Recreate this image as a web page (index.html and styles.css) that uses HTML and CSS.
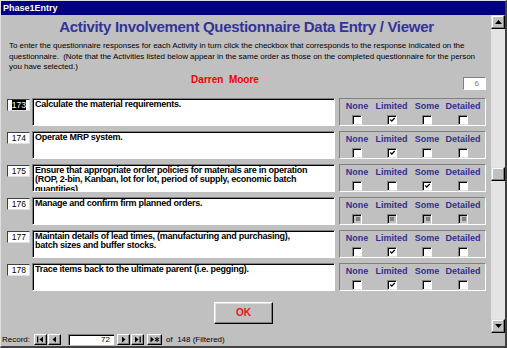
FILE: index.html
```html
<!DOCTYPE html>
<html lang="en">
<head>
    <meta charset="UTF-8">
    <title>Phase1Entry</title>
    <link rel="stylesheet" href="styles.css">
</head>
<body>
<div class="window">
    <div class="titlebar">Phase1Entry</div>

    <div class="frame">
        <div class="form">
            <h1 class="heading">Activity Involvement Questionnaire Data Entry / Viewer</h1>
            <p class="intro">To enter the questionnaire responses for each Activity in turn click the checkbox that corresponds to the response indicated on the<br>questionnaire.&nbsp; (Note that the Activities listed below appear in the same order as those on the completed questionnaire for the person<br>you have selected.)</p>

            <div class="person">
                <div class="person-name">Darren&nbsp; Moore</div>
                <div class="count">6</div>
            </div>

            <div class="activities">
                <div class="activity">
                    <div class="num"><span class="selected">173</span></div>
                    <div class="desc">Calculate the material requirements.</div>
                    <div class="answers">
                        <div class="answer"><span class="answer-label">None</span><span class="check"></span></div>
                        <div class="answer"><span class="answer-label">Limited</span><span class="check on"><svg viewBox="0 0 8 8" width="8" height="8"><path d="M1.5 3.5 L3.2 5.3 L6.5 1.8" fill="none" stroke="#000" stroke-width="1.5"/></svg></span></div>
                        <div class="answer"><span class="answer-label">Some</span><span class="check"></span></div>
                        <div class="answer"><span class="answer-label">Detailed</span><span class="check"></span></div>
                    </div>
                </div>

                <div class="activity">
                    <div class="num">174</div>
                    <div class="desc">Operate MRP system.</div>
                    <div class="answers">
                        <div class="answer"><span class="answer-label">None</span><span class="check"></span></div>
                        <div class="answer"><span class="answer-label">Limited</span><span class="check on"><svg viewBox="0 0 8 8" width="8" height="8"><path d="M1.5 3.5 L3.2 5.3 L6.5 1.8" fill="none" stroke="#000" stroke-width="1.5"/></svg></span></div>
                        <div class="answer"><span class="answer-label">Some</span><span class="check"></span></div>
                        <div class="answer"><span class="answer-label">Detailed</span><span class="check"></span></div>
                    </div>
                </div>

                <div class="activity">
                    <div class="num">175</div>
                    <div class="desc">Ensure that appropriate order policies for materials are in operation<br>(ROP, 2-bin, Kanban, lot for lot, period of supply, economic batch<br>quantities)</div>
                    <div class="answers">
                        <div class="answer"><span class="answer-label">None</span><span class="check"></span></div>
                        <div class="answer"><span class="answer-label">Limited</span><span class="check"></span></div>
                        <div class="answer"><span class="answer-label">Some</span><span class="check on"><svg viewBox="0 0 8 8" width="8" height="8"><path d="M1.5 3.5 L3.2 5.3 L6.5 1.8" fill="none" stroke="#000" stroke-width="1.5"/></svg></span></div>
                        <div class="answer"><span class="answer-label">Detailed</span><span class="check"></span></div>
                    </div>
                </div>

                <div class="activity">
                    <div class="num">176</div>
                    <div class="desc">Manage and confirm firm planned orders.</div>
                    <div class="answers">
                        <div class="answer"><span class="answer-label">None</span><span class="check null"></span></div>
                        <div class="answer"><span class="answer-label">Limited</span><span class="check null"></span></div>
                        <div class="answer"><span class="answer-label">Some</span><span class="check null"></span></div>
                        <div class="answer"><span class="answer-label">Detailed</span><span class="check null"></span></div>
                    </div>
                </div>

                <div class="activity">
                    <div class="num">177</div>
                    <div class="desc">Maintain details of lead times, (manufacturing and purchasing),<br>batch sizes and buffer stocks.</div>
                    <div class="answers">
                        <div class="answer"><span class="answer-label">None</span><span class="check"></span></div>
                        <div class="answer"><span class="answer-label">Limited</span><span class="check on"><svg viewBox="0 0 8 8" width="8" height="8"><path d="M1.5 3.5 L3.2 5.3 L6.5 1.8" fill="none" stroke="#000" stroke-width="1.5"/></svg></span></div>
                        <div class="answer"><span class="answer-label">Some</span><span class="check"></span></div>
                        <div class="answer"><span class="answer-label">Detailed</span><span class="check"></span></div>
                    </div>
                </div>

                <div class="activity">
                    <div class="num">178</div>
                    <div class="desc">Trace items back to the ultimate parent (i.e. pegging).</div>
                    <div class="answers">
                        <div class="answer"><span class="answer-label">None</span><span class="check"></span></div>
                        <div class="answer"><span class="answer-label">Limited</span><span class="check on"><svg viewBox="0 0 8 8" width="8" height="8"><path d="M1.5 3.5 L3.2 5.3 L6.5 1.8" fill="none" stroke="#000" stroke-width="1.5"/></svg></span></div>
                        <div class="answer"><span class="answer-label">Some</span><span class="check"></span></div>
                        <div class="answer"><span class="answer-label">Detailed</span><span class="check"></span></div>
                    </div>
                </div>
            </div>

            <div class="actions">
                <button class="ok">OK</button>
            </div>
        </div>

        <div class="vscroll">
            <div class="sb-btn"><svg viewBox="0 0 7 4" width="7" height="4"><polygon points="3.5,0 7,4 0,4" fill="#000"/></svg></div>
            <div class="sb-thumb"></div>
            <div class="sb-space"></div>
            <div class="sb-btn"><svg viewBox="0 0 7 4" width="7" height="4"><polygon points="0,0 7,0 3.5,4" fill="#000"/></svg></div>
        </div>
    </div>

    <div class="navbar">
        <span class="nav-label">Record:</span>
        <span class="nav-btn first"><svg viewBox="0 0 9 7" width="9" height="7"><rect x="1" y="0.5" width="1.3" height="6" fill="#000"/><polygon points="7,0.5 7,6.5 3.5,3.5" fill="#000"/></svg></span>
        <span class="nav-btn"><svg viewBox="0 0 9 7" width="9" height="7"><polygon points="6,0.5 6,6.5 2.5,3.5" fill="#000"/></svg></span>
        <span class="nav-field">72</span>
        <span class="nav-btn"><svg viewBox="0 0 9 7" width="9" height="7"><polygon points="3,0.5 3,6.5 6.5,3.5" fill="#000"/></svg></span>
        <span class="nav-btn"><svg viewBox="0 0 9 7" width="9" height="7"><polygon points="2,0.5 2,6.5 5.5,3.5" fill="#000"/><rect x="6.5" y="0.5" width="1.3" height="6" fill="#000"/></svg></span>
        <span class="nav-btn wide"><svg viewBox="0 0 11 7" width="11" height="7"><polygon points="1.5,0.5 1.5,6.5 5,3.5" fill="#000"/><path d="M8 1 V6 M5.8 2.2 L10.2 4.8 M5.8 4.8 L10.2 2.2" stroke="#000" stroke-width="1"/></svg></span>
        <span class="nav-total">of&nbsp; 148 (Filtered)</span>
    </div>
</div>
</body>
</html>
```

FILE: styles.css
```css
body {
    margin: 0;
    font-family: "Liberation Sans", Arial, sans-serif;
    background-color: #c0c0c0;
}
.window {
    width: 507px;
    height: 348px;
    box-sizing: border-box;
    border-top: 1px solid #dfdfdf;
    border-left: 1px solid #dfdfdf;
    border-right: 2px solid #404040;
    border-bottom: 2px solid #404040;
    background-color: #c0c0c0;
    display: flex;
    flex-direction: column;
    overflow: hidden;
}
.titlebar {
    height: 14px;
    background-color: #000080;
    color: #fff;
    font-weight: bold;
    font-size: 9px;
    line-height: 14px;
    padding-left: 2px;
}
.frame {
    display: flex;
    height: 318px;
}
.form {
    flex: 1;
    padding: 0 5px 0 6px;
}
.heading {
    margin: 3px 0 0;
    font-size: 15px;
    line-height: 18px;
    letter-spacing: -0.3px;
    text-align: center;
    color: #333399;
}
.intro {
    margin: 5px 0 0 2px;
    font-size: 8px;
    line-height: 10.5px;
    letter-spacing: -0.03px;
    white-space: nowrap;
}
.person {
    display: flex;
    align-items: flex-start;
    height: 25px;
}
.person-name {
    flex: 1;
    margin-top: 1px;
    text-align: center;
    color: #f00000;
    font-weight: bold;
    font-size: 10px;
    line-height: 12px;
}
.count {
    width: 23px;
    height: 13px;
    box-sizing: border-box;
    margin: 4px 0 0 20px;
    background-color: #fff;
    border-top: 1px solid #808080;
    border-left: 1px solid #808080;
    border-right: 1px solid #fff;
    border-bottom: 1px solid #fff;
    color: #808080;
    font-size: 8px;
    line-height: 11px;
    text-align: right;
    padding-right: 6px;
}
.activities {
    display: flex;
    flex-direction: column;
    gap: 5px;
}
.activity {
    display: flex;
    height: 28px;
}
.num {
    width: 23px;
    height: 12px;
    box-sizing: border-box;
    margin: 1px 2px 0 0;
    background-color: #fff;
    border-top: 1px solid #404040;
    border-left: 1px solid #404040;
    border-right: 1px solid #dfdfdf;
    border-bottom: 1px solid #dfdfdf;
    font-size: 8.5px;
    line-height: 10px;
    text-align: right;
    padding-right: 3px;
}
.selected {
    background-color: #000;
    color: #fff;
}
.desc {
    flex: 1;
    box-sizing: border-box;
    background-color: #fff;
    border-top: 1px solid #808080;
    border-left: 1px solid #808080;
    border-right: 1px solid #fff;
    border-bottom: 1px solid #fff;
    box-shadow: inset 1px 1px #000;
    padding: 1px 2px 0 2px;
    font-size: 9px;
    font-weight: bold;
    line-height: 9.5px;
    letter-spacing: -0.25px;
    white-space: nowrap;
    overflow: hidden;
}
.answers {
    width: 147px;
    box-sizing: border-box;
    margin-left: 4px;
    border-top: 1px solid #808080;
    border-left: 1px solid #808080;
    border-right: 1px solid #fff;
    border-bottom: 1px solid #fff;
    display: grid;
    grid-template-columns: 34px 35px 36px 36px;
    padding-top: 2px;
}
.answer {
    display: flex;
    flex-direction: column;
    align-items: center;
}
.answer-label {
    font-size: 9px;
    font-weight: bold;
    line-height: 10px;
    color: #30308f;
}
.check {
    width: 10px;
    height: 10px;
    box-sizing: border-box;
    margin-top: 4px;
    background-color: #fff;
    border-top: 1px solid #808080;
    border-left: 1px solid #808080;
    border-right: 1px solid #fff;
    border-bottom: 1px solid #dfdfdf;
    box-shadow: inset 1px 1px #000;
    display: flex;
    align-items: center;
    justify-content: center;
}
.check svg {
    margin: 1px 0 0 1px;
}
.check.null {
    background-color: #c0c0c0;
}
.check.null::after {
    content: "";
    width: 4px;
    height: 4px;
    margin: 1px 0 0 1px;
    background-color: #808080;
}
.actions {
    display: flex;
    justify-content: center;
    padding-right: 6px;
    margin-top: 11px;
}
.ok {
    width: 59px;
    height: 22px;
    padding: 0;
    background-color: #c0c0c0;
    border: 1px solid;
    border-color: #fff #000 #000 #fff;
    box-shadow: inset -1px -1px #808080, inset 1px 1px #dfdfdf;
    color: #f01010;
    font-family: "Liberation Sans", Arial, sans-serif;
    font-weight: bold;
    font-size: 10px;
}
.vscroll {
    width: 14px;
    background-color: #e4e4e4;
    display: flex;
    flex-direction: column;
}
.sb-btn,
.sb-thumb {
    width: 14px;
    height: 14px;
    box-sizing: border-box;
    background-color: #c0c0c0;
    border: 1px solid;
    border-color: #dfdfdf #000 #000 #dfdfdf;
    box-shadow: inset -1px -1px #808080, inset 1px 1px #fff;
    display: flex;
    align-items: center;
    justify-content: center;
}
.sb-thumb {
    margin-top: 138px;
}
.sb-space {
    flex: 1;
}
.navbar {
    height: 13px;
    display: flex;
    align-items: center;
    font-size: 8px;
}
.nav-label {
    margin: 0 4px 0 1px;
}
.nav-btn {
    width: 13px;
    height: 11px;
    box-sizing: border-box;
    margin-right: 1px;
    background-color: #c0c0c0;
    border: 1px solid;
    border-color: #fff #000 #000 #fff;
    box-shadow: inset -1px -1px #808080;
    display: flex;
    align-items: center;
    justify-content: center;
}
.nav-btn.wide {
    width: 15px;
    margin-left: 2px;
}
.nav-field {
    width: 46px;
    height: 11px;
    box-sizing: border-box;
    margin: 0 3px 0 6px;
    background-color: #fff;
    border-top: 1px solid #808080;
    border-left: 1px solid #808080;
    box-shadow: inset 1px 1px #000;
    text-align: right;
    line-height: 10px;
    padding-right: 4px;
}
.nav-total {
    margin-left: 3px;
}
```
